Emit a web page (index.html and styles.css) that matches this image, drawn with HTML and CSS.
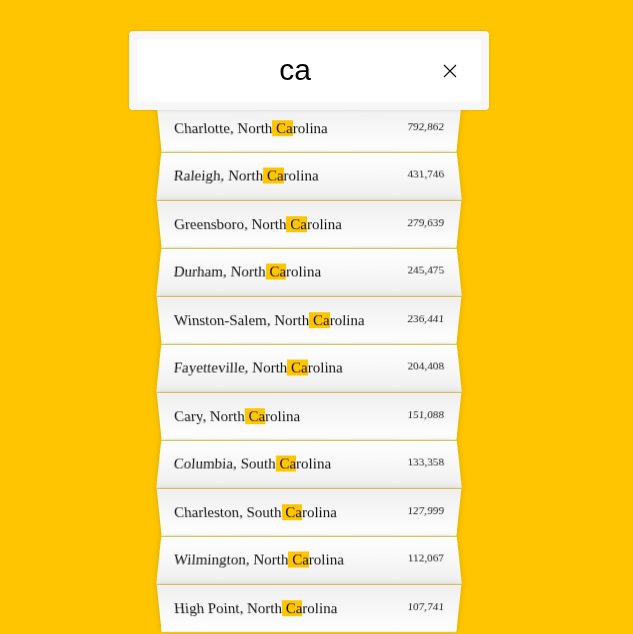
FILE: index.html
```html
<!DOCTYPE html>
<html lang="en">
<head>
<meta charset="utf-8">
<title>Type Ahead</title>
<link rel="stylesheet" href="styles.css">
</head>
<body>
<div class="page">
  <form class="search-form">
    <div class="search-wrap">
      <input type="text" class="search" value="ca" placeholder="City or State">
      <svg class="clear" width="14" height="14" viewBox="0 0 14 14" aria-hidden="true">
        <path d="M1 1 L13 13 M13 1 L1 13" stroke="#111" stroke-width="1.2" fill="none"/>
      </svg>
    </div>
    <ul class="suggestions">
      <li><span class="name">Charlotte, North<span class="hl"> Ca</span>rolina</span><span class="population">792,862</span></li>
      <li><span class="name">Raleigh, North<span class="hl"> Ca</span>rolina</span><span class="population">431,746</span></li>
      <li><span class="name">Greensboro, North<span class="hl"> Ca</span>rolina</span><span class="population">279,639</span></li>
      <li><span class="name">Durham, North<span class="hl"> Ca</span>rolina</span><span class="population">245,475</span></li>
      <li><span class="name">Winston-Salem, North<span class="hl"> Ca</span>rolina</span><span class="population">236,441</span></li>
      <li><span class="name">Fayetteville, North<span class="hl"> Ca</span>rolina</span><span class="population">204,408</span></li>
      <li><span class="name">Cary, North<span class="hl"> Ca</span>rolina</span><span class="population">151,088</span></li>
      <li><span class="name">Columbia, South<span class="hl"> Ca</span>rolina</span><span class="population">133,358</span></li>
      <li><span class="name">Charleston, South<span class="hl"> Ca</span>rolina</span><span class="population">127,999</span></li>
      <li><span class="name">Wilmington, North<span class="hl"> Ca</span>rolina</span><span class="population">112,067</span></li>
      <li><span class="name">High Point, North<span class="hl"> Ca</span>rolina</span><span class="population">107,741</span></li>
    </ul>
  </form>
</div>
</body>
</html>
```
FILE: styles.css
```css
* , *::before, *::after { box-sizing: border-box; }

html {
  background: #ffc600;
  font-family: "Liberation Serif", "Times New Roman", serif;
  font-size: 15px;
  color: #111;
}

body {
  margin: 0;
  overflow: hidden;
  height: 634px;
}

.page {
  width: 618px;
}

.search-form {
  width: 300px;
  margin: 23px auto 0;
}

.search-wrap {
  position: relative;
  top: 8px;
  z-index: 2;
  width: 120%;
  margin-left: -10%;
}

.search {
  display: block;
  width: 100%;
  margin: 0;
  padding: 15px 43px 15px 15px;
  border: 7.5px solid #F7F7F7;
  border-radius: 4px;
  outline: 0;
  background: #fff;
  text-align: center;
  font-family: "Liberation Sans", Arial, sans-serif;
  font-size: 30px;
  line-height: 34.5px;
  color: #000;
  box-shadow: 0 0 3.75px rgba(0, 0, 0, 0.12), inset 0 0 1.5px rgba(0, 0, 0, 0.19);
}

.clear {
  position: absolute;
  left: 314px;
  top: 33px;
}

.suggestions {
  margin: 1px 0 0;
  padding: 0;
  position: relative;
  list-style: none;
}

.suggestions li {
  display: flex;
  justify-content: space-between;
  margin: 0;
  padding: 15px;
  line-height: 17px;
  background: #fff;
  border-bottom: 1px solid #e9c650;
  box-shadow: 0 0 7.5px rgba(0, 0, 0, 0.14);
}

.suggestions li:nth-child(even) {
  transform: perspective(75px) rotateX(3deg) translateY(1.5px) scale(1.001);
  background: linear-gradient(to bottom, #ffffff 0%, #EFEFEF 100%);
}

.suggestions li:nth-child(odd) {
  transform: perspective(75px) rotateX(-3deg) translateY(2.25px);
  background: linear-gradient(to top, #ffffff 0%, #EFEFEF 100%);
}

.population {
  font-size: 11.25px;
  line-height: 13px;
  color: #222;
}

.hl {
  background: #ffc600;
}
```
